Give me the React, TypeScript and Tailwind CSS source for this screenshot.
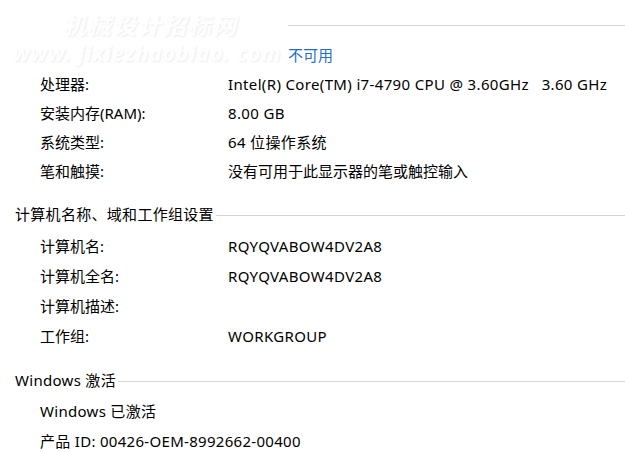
import React from 'react';

const font = { fontFamily: '"Noto Sans", "Noto Sans CJK SC", sans-serif' };

const Row = ({ label, value, h = 'h-[30px]', latin = true }: { label: string; value?: string; h?: string; latin?: boolean }) => (
  <div className={`flex items-center ${h}`}>
    <div className="w-[228px] pl-[40px] shrink-0">{label}</div>
    <div className={latin ? 'whitespace-pre tracking-[0.35px]' : 'whitespace-pre'}>{value}</div>
  </div>
);

const Header = ({ title, className = '' }: { title: string; className?: string }) => (
  <div className={`flex items-center h-[30px] pl-[15px] ${className}`}>
    <span className="whitespace-nowrap tracking-[0.3px]">{title}</span>
    <div className="flex-1 h-px bg-[#d5d5d5] ml-[2px] mt-[2px]"></div>
  </div>
);

export default function App() {
  return (
    <div className="relative w-[625px] h-[452px] bg-white text-[15px] text-black overflow-hidden" style={font}>
      {/* watermark */}
      <div className="absolute left-[8px] top-[10px] pointer-events-none select-none italic font-bold text-white [text-shadow:1px_1px_2px_#ebebeb]">
        <div className="pl-[55px] text-[23px] leading-[30px] tracking-[2px]">机械设计招标网</div>
        <div className="pl-[5px] text-[21px] leading-[26px] tracking-[1px]">www. jixiezhaobiao. com</div>
      </div>

      <div className="h-[40px] pt-[25px]">
        <div className="ml-[288px] h-px bg-[#d5d5d5]"></div>
      </div>
      <div className="flex items-center h-[30px] pl-[288px] text-[#1e6fcf]">不可用</div>

      <Row h="h-[29px]" label="处理器:" value="Intel(R) Core(TM) i7-4790 CPU @ 3.60GHz   3.60 GHz" />
      <Row h="h-[29px]" label="安装内存(RAM):" value="8.00 GB" />
      <Row h="h-[29px]" label="系统类型:" value="64 位操作系统" />
      <Row h="h-[29px]" label="笔和触摸:" value="没有可用于此显示器的笔或触控输入" latin={false} />

      <Header title="计算机名称、域和工作组设置" className="mt-[13px] mb-[2px]" />
      <Row label="计算机名:" value="RQYQVABOW4DV2A8" />
      <Row label="计算机全名:" value="RQYQVABOW4DV2A8" />
      <Row label="计算机描述:" />
      <Row label="工作组:" value="WORKGROUP" />

      <Header title="Windows 激活" className="mt-[14px] mb-[1px]" />
      <div className="flex items-center h-[30px] pl-[40px] tracking-[0.3px]">Windows 已激活</div>
      <div className="flex items-center h-[30px] pl-[40px] tracking-[0.3px]">产品 ID: 00426-OEM-8992662-00400</div>
    </div>
  );
}
